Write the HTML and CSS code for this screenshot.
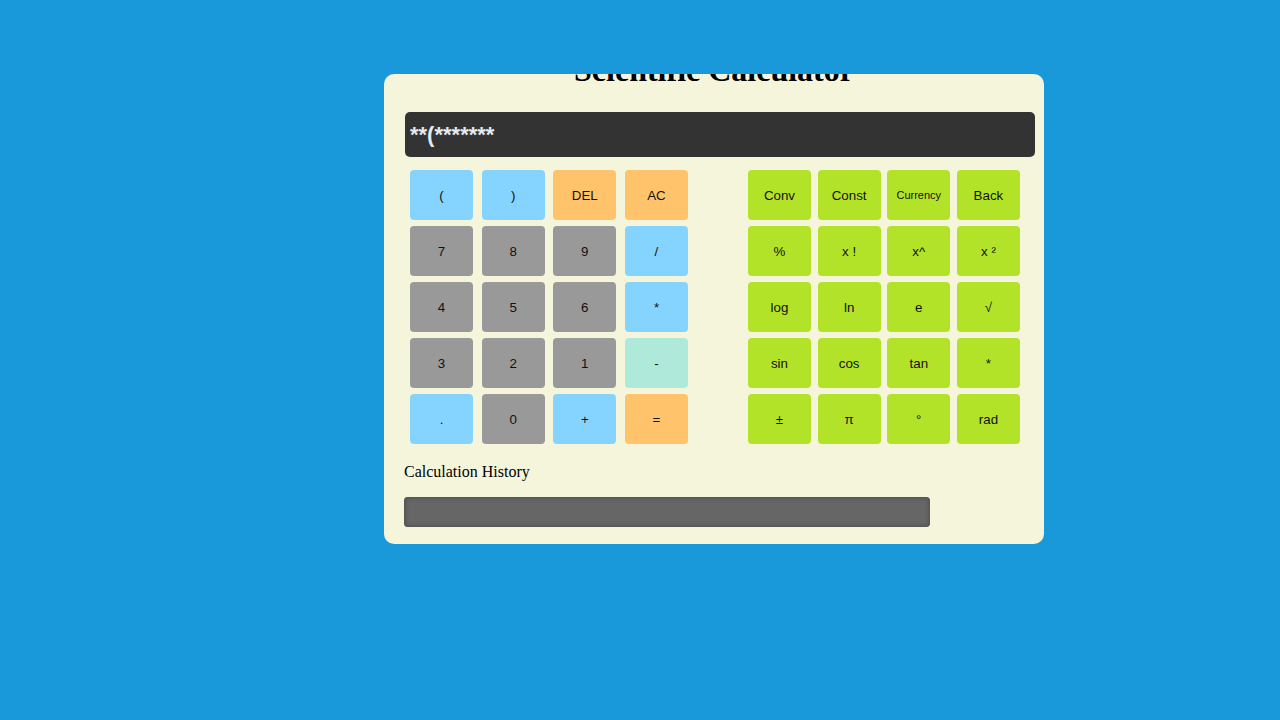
FILE: index.html
```html
<!DOCTYPE html>
<html lang="en">
<head>
    <meta charset="UTF-8">
    <meta name="viewport" content="width=device-width, initial-scale=1.0">
    <title>Scientific Calculator</title>
    <link rel="stylesheet" href="styles.css">
</head>
<body>
    <div class="calculator">
        <h1>Scientific Calculator</h1>

        <div class="display" id="display">**(*******</div>

        <div class="keypads">
            <div class="keys basic">
                <button class="op">(</button>
                <button class="op">)</button>
                <button class="warn">DEL</button>
                <button class="warn">AC</button>

                <button class="num">7</button>
                <button class="num">8</button>
                <button class="num">9</button>
                <button class="op">/</button>

                <button class="num">4</button>
                <button class="num">5</button>
                <button class="num">6</button>
                <button class="op">*</button>

                <button class="num">3</button>
                <button class="num">2</button>
                <button class="num">1</button>
                <button class="minus">-</button>

                <button class="op">.</button>
                <button class="num">0</button>
                <button class="op">+</button>
                <button class="warn">=</button>
            </div>

            <div class="keys sci">
                <button>Conv</button>
                <button>Const</button>
                <button class="small">Currency</button>
                <button>Back</button>

                <button>%</button>
                <button>x !</button>
                <button>x^</button>
                <button>x ²</button>

                <button>log</button>
                <button>ln</button>
                <button>e</button>
                <button>√</button>

                <button>sin</button>
                <button>cos</button>
                <button>tan</button>
                <button>*</button>

                <button>±</button>
                <button>π</button>
                <button>°</button>
                <button>rad</button>
            </div>
        </div>

        <div class="history-title">Calculation History</div>
        <div class="history" id="history"></div>
    </div>
</body>
</html>
```

FILE: styles.css
```css
body {
    margin: 0;
    background-color: #1998da;
    font-family: 'Liberation Serif', 'Times New Roman', serif;
}

.calculator {
    width: 620px;
    margin: 74px 0 0 384px;
    padding: 20px 20px 17px;
    background-color: #f5f5dc;
    border-radius: 10px;
    overflow: hidden;
}

.calculator h1 {
    margin: -42px 0 24px;
    height: 36px;
    line-height: 36px;
    font-size: 32px;
    text-align: center;
    color: #000;
}

.display {
    width: 625px;
    height: 45px;
    margin-left: 1px;
    padding-left: 5px;
    line-height: 45px;
    background-color: #333;
    border-radius: 5px;
    color: #e4eaef;
    font-family: 'Liberation Sans', Arial, sans-serif;
    font-size: 22px;
    font-weight: bold;
}

.keypads {
    display: flex;
    gap: 60px;
    margin-top: 13px;
    padding-left: 6px;
}

.keys {
    display: grid;
    grid-template-columns: repeat(4, 63px);
    grid-auto-rows: 50px;
    row-gap: 6px;
}

.keys.basic {
    column-gap: 8.67px;
}

.keys.sci {
    column-gap: 6.67px;
}

.keys button {
    border: none;
    border-radius: 4px;
    padding: 0;
    font-family: 'Liberation Sans', Arial, sans-serif;
    font-size: 13.33px;
    color: #111;
    cursor: pointer;
}

.keys .num {
    background-color: #999;
}

.keys .op {
    background-color: #85d4ff;
}

.keys .warn {
    background-color: #ffc36b;
}

.keys .minus {
    background-color: #afe9da;
}

.keys.sci button {
    background-color: #b3e329;
}

.keys.sci .small {
    font-size: 11px;
}

.history-title {
    margin-top: 19px;
    font-size: 16px;
    color: #000;
}

.history {
    width: 526px;
    height: 30px;
    margin-top: 16px;
    background-color: #666;
    border-radius: 4px;
    box-shadow: inset 0 0 5px #444;
}
```
